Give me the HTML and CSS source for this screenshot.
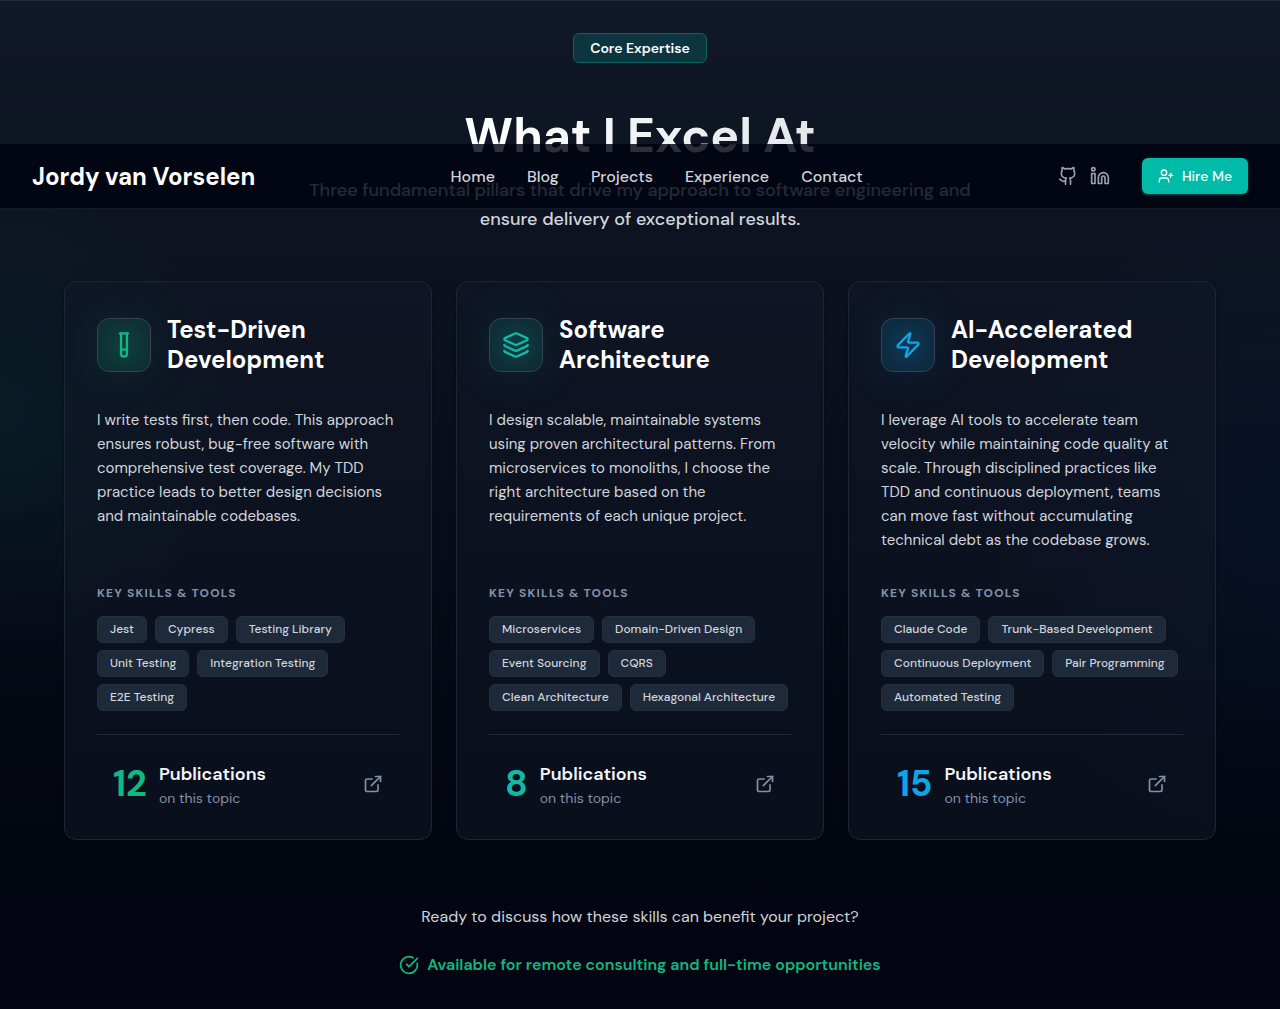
FILE: index.html
```html
<!DOCTYPE html>
<html lang="en">
<head>
<meta charset="utf-8">
<meta name="viewport" content="width=device-width, initial-scale=1">
<title>Jordy van Vorselen</title>
<link rel="stylesheet" href="styles.css">
</head>
<body>
<svg class="sprite" aria-hidden="true">
  <symbol id="external" viewBox="0 0 24 24"><path d="M15 3h6v6"/><path d="M10 14 21 3"/><path d="M18 13v6a2 2 0 0 1-2 2H5a2 2 0 0 1-2-2V8a2 2 0 0 1 2-2h6"/></symbol>
</svg>
<header class="site-header">
  <a class="brand" href="#">Jordy van Vorselen</a>
  <nav class="nav">
    <a href="#">Home</a>
    <a href="#">Blog</a>
    <a href="#">Projects</a>
    <a href="#">Experience</a>
    <a href="#">Contact</a>
  </nav>
  <div class="actions">
    <a class="social" href="#" aria-label="GitHub"><svg class="icon" viewBox="0 0 24 24"><path d="M15 22v-4a4.8 4.8 0 0 0-1-3.5c3 0 6-2 6-5.5.08-1.25-.27-2.48-1-3.5.28-1.15.28-2.35 0-3.5 0 0-1 0-3 1.5-2.64-.5-5.36-.5-8 0C6 2 5 2 5 2c-.3 1.15-.3 2.35 0 3.5A5.403 5.403 0 0 0 4 9c0 3.5 3 5.5 6 5.5-.39.49-.68 1.05-.85 1.65-.17.6-.22 1.23-.15 1.85v4"/><path d="M9 18c-4.51 2-5-2-7-2"/></svg></a>
    <a class="social" href="#" aria-label="LinkedIn"><svg class="icon" viewBox="0 0 24 24"><path d="M16 8a6 6 0 0 1 6 6v7h-4v-7a2 2 0 0 0-4 0v7h-4v-7a6 6 0 0 1 6-6z"/><path d="M2 9h4v12H2z"/><circle cx="4" cy="4" r="2"/></svg></a>
    <button class="hire" type="button"><svg class="icon icon-small" viewBox="0 0 24 24"><path d="M16 21v-2a4 4 0 0 0-4-4H6a4 4 0 0 0-4 4v2"/><circle cx="9" cy="7" r="4"/><path d="M19 8v6"/><path d="M22 11h-6"/></svg>Hire Me</button>
  </div>
</header>

<main class="expertise">
  <div class="intro">
    <span class="badge">Core Expertise</span>
    <h1>What I Excel At</h1>
    <p>Three fundamental pillars that drive my approach to software engineering and ensure delivery of exceptional results.</p>
  </div>

  <div class="cards">
    <article class="card green">
      <div class="card-head">
        <span class="tile"><svg class="icon icon-large" viewBox="0 0 24 24"><path d="M14.5 2v17.5c0 1.4-1.1 2.5-2.5 2.5s-2.5-1.1-2.5-2.5V2"/><path d="M8.5 2h7"/><path d="M14.5 16h-5"/></svg></span>
        <h2>Test-Driven Development</h2>
      </div>
      <p class="text">I write tests first, then code. This approach ensures robust, bug-free software with comprehensive test coverage. My TDD practice leads to better design decisions and maintainable codebases.</p>
      <h3>Key Skills &amp; Tools</h3>
      <ul class="tags"><li>Jest</li><li>Cypress</li><li>Testing Library</li><li>Unit Testing</li><li>Integration Testing</li><li>E2E Testing</li></ul>
      <a class="pubs" href="#"><span class="count">12</span><span class="pubs-text"><strong>Publications</strong><span>on this topic</span></span><svg class="icon"><use href="#external"/></svg></a>
    </article>

    <article class="card teal">
      <div class="card-head">
        <span class="tile"><svg class="icon icon-large" viewBox="0 0 24 24"><path d="M12.83 2.18a2 2 0 0 0-1.66 0L2.6 6.08a1 1 0 0 0 0 1.83l8.58 3.91a2 2 0 0 0 1.66 0l8.58-3.9a1 1 0 0 0 0-1.83Z"/><path d="M2 12a1 1 0 0 0 .58.91l8.6 3.91a2 2 0 0 0 1.65 0l8.58-3.9A1 1 0 0 0 22 12"/><path d="M2 17a1 1 0 0 0 .58.91l8.6 3.91a2 2 0 0 0 1.65 0l8.58-3.9A1 1 0 0 0 22 17"/></svg></span>
        <h2>Software Architecture</h2>
      </div>
      <p class="text">I design scalable, maintainable systems using proven architectural patterns. From microservices to monoliths, I choose the right architecture based on the requirements of each unique project.</p>
      <h3>Key Skills &amp; Tools</h3>
      <ul class="tags"><li>Microservices</li><li>Domain-Driven Design</li><li>Event Sourcing</li><li>CQRS</li><li>Clean Architecture</li><li>Hexagonal Architecture</li></ul>
      <a class="pubs" href="#"><span class="count">8</span><span class="pubs-text"><strong>Publications</strong><span>on this topic</span></span><svg class="icon"><use href="#external"/></svg></a>
    </article>

    <article class="card blue">
      <div class="card-head">
        <span class="tile"><svg class="icon icon-large" viewBox="0 0 24 24"><path d="M4 14a1 1 0 0 1-.78-1.63l9.9-10.2a.5.5 0 0 1 .86.46l-1.92 6.02A1 1 0 0 0 13 10h7a1 1 0 0 1 .78 1.63l-9.9 10.2a.5.5 0 0 1-.86-.46l1.92-6.02A1 1 0 0 0 11 14z"/></svg></span>
        <h2>AI-Accelerated Development</h2>
      </div>
      <p class="text">I leverage AI tools to accelerate team velocity while maintaining code quality at scale. Through disciplined practices like TDD and continuous deployment, teams can move fast without accumulating technical debt as the codebase grows.</p>
      <h3>Key Skills &amp; Tools</h3>
      <ul class="tags"><li>Claude Code</li><li>Trunk-Based Development</li><li>Continuous Deployment</li><li>Pair Programming</li><li>Automated Testing</li></ul>
      <a class="pubs" href="#"><span class="count">15</span><span class="pubs-text"><strong>Publications</strong><span>on this topic</span></span><svg class="icon"><use href="#external"/></svg></a>
    </article>
  </div>

  <div class="closing">
    <p>Ready to discuss how these skills can benefit your project?</p>
    <p class="available"><svg class="icon" viewBox="0 0 24 24"><path d="M21.801 10A10 10 0 1 1 17 3.335"/><path d="m9 11 3 3L22 4"/></svg>Available for remote consulting and full-time opportunities</p>
  </div>
</main>
</body>
</html>
```
FILE: styles.css
```css
*, *::before, *::after { box-sizing: border-box; }
body, h1, h2, h3, p, ul { margin: 0; padding: 0; }

body {
  position: relative;
  background: #030712;
  color: #fff;
  font-family: "DM Sans", Inter, sans-serif;
  font-size: 16px;
  line-height: 24px;
}

a { color: inherit; text-decoration: none; }
.sprite { display: none; }

.icon {
  width: 20px;
  height: 20px;
  flex: none;
  fill: none;
  stroke: currentColor;
  stroke-width: 2;
  stroke-linecap: round;
  stroke-linejoin: round;
}
.icon-small { width: 16px; height: 16px; }
.icon-large { width: 28px; height: 28px; }

/* Header bar, floating over the section */
.site-header {
  position: absolute;
  z-index: 2;
  top: 144px;
  left: 0;
  right: 0;
  display: flex;
  align-items: center;
  justify-content: space-between;
  height: 65px;
  padding: 0 32px;
  background: rgba(0, 4, 15, 0.82);
  border-bottom: 1px solid #111a28;
}
.brand { font-size: 24px; font-weight: 700; line-height: 33px; }
.nav { display: flex; gap: 32px; color: #d1d5dc; font-weight: 500; line-height: 25px; }
.actions { display: flex; align-items: center; gap: 12px; color: #99a1af; }
.social { display: flex; }
.hire {
  display: flex;
  align-items: center;
  gap: 8px;
  height: 36px;
  margin-left: 20px;
  padding: 0 16px;
  border: 0;
  border-radius: 6px;
  background: #00bba7;
  box-shadow: 0 1px 3px rgba(0, 187, 167, 0.4);
  color: #fff;
  font: 500 14px/20px "DM Sans", Inter, sans-serif;
}

.expertise {
  padding: 32px 64px;
  border-top: 1px solid #1e2939;
  border-bottom: 1px solid #1e2939;
  background:
    radial-gradient(circle 240px at 0 420px, rgba(0, 150, 137, 0.1), transparent),
    radial-gradient(circle 320px at 100% 520px, rgba(14, 90, 200, 0.08), transparent),
    linear-gradient(#111827, #030712 75%, #020511);
}

.intro { display: flex; flex-direction: column; align-items: center; text-align: center; }
.badge {
  padding: 4px 16px;
  border: 1px solid #0b6660;
  border-radius: 6px;
  background: #0d353f;
  font-size: 14px;
  font-weight: 600;
  line-height: 20px;
}
.intro h1 {
  margin-top: 43px;
  background: linear-gradient(90deg, #fff, #e5e7eb);
  background-clip: text;
  color: transparent;
  font-size: 48px;
  font-weight: 700;
  line-height: 60px;
}
.intro p { max-width: 672px; margin-top: 10px; color: #d1d5dc; font-size: 18px; font-weight: 500; line-height: 29px; }

.cards { display: grid; grid-template-columns: repeat(3, 1fr); gap: 24px; margin-top: 47px; }
.card {
  display: flex;
  flex-direction: column;
  padding: 32px 32px 31px;
  border: 1px solid #1c2634;
  border-radius: 12px;
  background: rgba(17, 24, 39, 0.5);
  box-shadow: 0 1px 3px rgba(0, 0, 0, 0.4);
}
.green { --accent: #10b981; --tint: rgba(16, 185, 129, 0.16); --glow: rgba(16, 185, 129, 0.12); }
.teal { --accent: #14b8a6; --tint: rgba(20, 184, 166, 0.16); --glow: rgba(20, 184, 166, 0.12); }
.blue { --accent: #0ea5e9; --tint: rgba(14, 165, 233, 0.16); --glow: rgba(14, 165, 233, 0.12); }

.card-head { display: flex; align-items: center; gap: 16px; min-height: 62px; }
.tile {
  display: grid;
  place-items: center;
  flex: none;
  width: 54px;
  height: 54px;
  border: 1px solid #364153;
  border-radius: 12px;
  background: radial-gradient(circle, var(--glow), transparent 70%), var(--tint);
  box-shadow: 0 0 48px var(--glow);
  color: var(--accent);
}
.card h2 { font-size: 24px; font-weight: 700; line-height: 30px; }
.text { flex: 1; margin-top: 32px; color: #d1d5dc; font-size: 15px; line-height: 24px; }
.card h3 {
  margin-top: 32px;
  color: #8491aa;
  font-size: 12px;
  font-weight: 700;
  line-height: 18px;
  letter-spacing: 0.1em;
  text-transform: uppercase;
}
.tags { display: flex; flex-wrap: wrap; gap: 7px 8px; margin: 14px 0 23px; list-style: none; }
.tags li {
  padding: 4px 12px;
  border: 1px solid #243041;
  border-radius: 6px;
  background: #1e2939;
  color: #d1d5dc;
  font-size: 12px;
  font-weight: 500;
  line-height: 17px;
}
.pubs {
  display: flex;
  align-items: center;
  gap: 12px;
  padding: 25px 16px 0;
  border-top: 1px solid #1e2939;
}
.count { color: var(--accent); font-size: 36px; font-weight: 700; line-height: 40px; }
.pubs-text { display: flex; flex: 1; flex-direction: column; color: #8491aa; font-size: 14px; line-height: 20px; }
.pubs-text strong { color: #f3f4f6; font-size: 18px; font-weight: 600; line-height: 28px; }
.pubs .icon { color: #8491aa; }

.closing { display: flex; flex-direction: column; align-items: center; gap: 24px; margin-top: 65px; color: #d1d5dc; }
.available { display: flex; align-items: center; gap: 8px; color: #10b981; font-weight: 600; }
```
